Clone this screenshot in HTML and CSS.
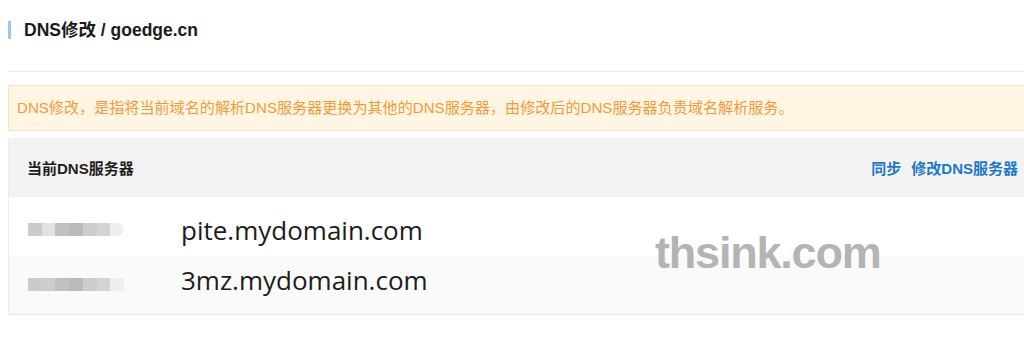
FILE: index.html
```html
<!DOCTYPE html>
<html lang="zh-CN">
<head>
<meta charset="utf-8">
<title>DNS修改</title>
<link rel="stylesheet" href="styles.css">
</head>
<body>
<div class="main">
  <div class="title-bar">
    <h1 class="title">DNS修改 / goedge.cn</h1>
  </div>
  <div class="divider"></div>
  <div class="notice">DNS修改，是指将当前域名的解析DNS服务器更换为其他的DNS服务器，由修改后的DNS服务器负责域名解析服务。</div>
  <div class="table">
    <div class="table-head">
      <span class="head-title">当前DNS服务器</span>
      <span class="head-links"><a class="link">同步</a><a class="link">修改DNS服务器</a></span>
    </div>
    <div class="row row-first">
      <span class="blur blur-a"><i class="b1"></i><i class="b2"></i><i class="b3"></i><i class="b4"></i><i class="b5"></i><i class="b6"></i><i class="b7"></i></span>
      <span class="domain">pite.mydomain.com</span>
    </div>
    <div class="row row-alt">
      <span class="blur blur-b"><i class="b1"></i><i class="b5"></i><i class="b3"></i><i class="b4"></i><i class="b5"></i><i class="b6"></i><i class="b7"></i></span>
      <span class="domain">3mz.mydomain.com</span>
    </div>
    <div class="watermark">thsink.com</div>
  </div>
</div>
</body>
</html>
```

FILE: styles.css
```css
html, body {
  margin: 0;
  padding: 0;
  background: #ffffff;
  overflow: hidden;
}
body {
  font-family: "Liberation Sans", "Noto Sans CJK SC", sans-serif;
  color: #222;
}
.main {
  margin-left: 8px;
  margin-right: -10px;
}
.title-bar {
  padding-top: 21px;
  height: 71px;
  box-sizing: border-box;
}
.title {
  margin: 0;
  border-left: 3px solid #9cc6ec;
  padding-left: 13px;
  font-size: 17.5px;
  line-height: 18px;
  font-weight: bold;
  color: #1b1b1b;
}
.divider {
  height: 1px;
  background: #ececec;
  margin-bottom: 13px;
}
.notice {
  height: 46px;
  box-sizing: border-box;
  border: 1px solid #f6e3c3;
  background: #fef6e3;
  color: #f29a3c;
  font-size: 15.1px;
  line-height: 44px;
  padding-left: 8px;
  white-space: nowrap;
  margin-bottom: 7px;
}
.table {
  position: relative;
  border-left: 1px solid #ececec;
  border-bottom: 1px solid #e6e6e6;
}
.table-head {
  height: 59px;
  background: #f3f3f3;
  display: flex;
  align-items: center;
  justify-content: space-between;
  padding: 0 16px 0 18px;
}
.head-title {
  font-size: 15px;
  font-weight: bold;
  color: #1e1e1e;
}
.head-links {
  display: flex;
  gap: 10px;
}
.link {
  color: #1d78c8;
  font-size: 15px;
  font-weight: bold;
}
.row {
  display: flex;
  align-items: center;
  padding-left: 19px;
  box-sizing: border-box;
}
.row-first {
  height: 59px;
  background: #ffffff;
  padding-top: 6px;
}
.row-alt {
  height: 58px;
  background: #fafafa;
  padding-bottom: 10px;
}
.blur {
  display: flex;
  width: 96px;
  height: 13px;
  filter: blur(0.6px);
}
.blur i {
  display: block;
  height: 100%;
  flex: 1;
}
.b1 { background: #cbcbcb; }
.b2 { background: #e2e2e2; }
.b3 { background: #c0c0c0; }
.b4 { background: #bababa; }
.b5 { background: #cdcdcd; }
.b6 { background: #d4d4d4; }
.b7 { background: #efefef; }
.blur-a .b7 { border-radius: 0 7px 7px 0; }
.blur-b { margin-top: 8px; }
.domain {
  margin-left: 57px;
  font-family: "Open Sans", "Noto Sans", sans-serif;
  font-size: 26px;
  color: #1c1c1c;
}
.watermark {
  position: absolute;
  left: 646px;
  top: 92px;
  font-family: "Liberation Sans", sans-serif;
  font-weight: bold;
  font-size: 45px;
  letter-spacing: -1.2px;
  color: #b4b4b4;
  line-height: 1;
}
```
